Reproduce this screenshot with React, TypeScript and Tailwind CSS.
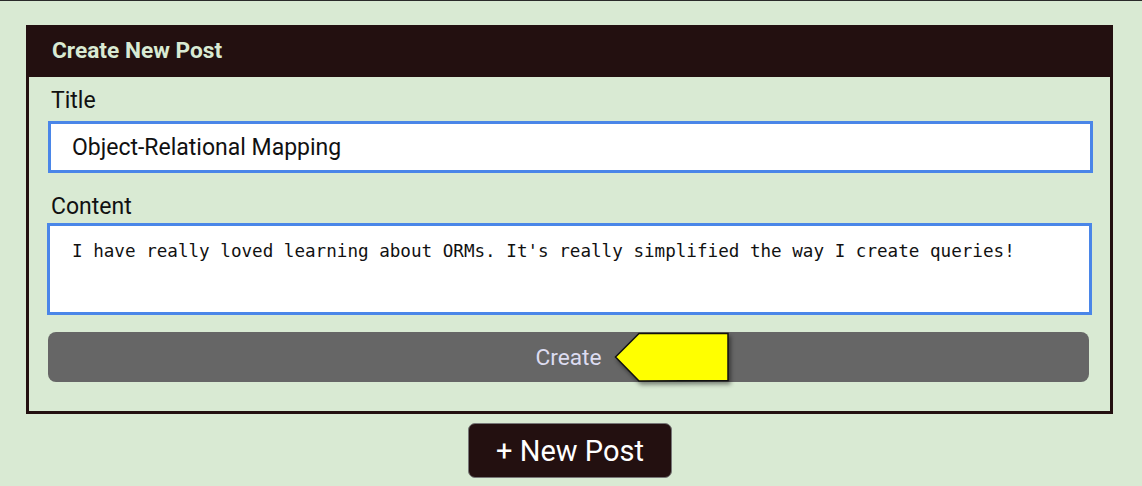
import React from "react";

export default function App() {
  return (
    <div
      className="w-[1142px] h-[486px] bg-[#d9ead3] border-t border-[#2a2a2a] overflow-hidden"
      style={{ fontFamily: "Roboto, 'Liberation Sans', sans-serif" }}
    >
      <div className="ml-[26px] mt-[24px] w-[1087px]">
        <div className="h-[52px] bg-[#231010] flex items-center pl-[26px]">
          <span className="text-[22.7px] font-bold text-[#d9ead3]">Create New Post</span>
        </div>
        <div className="border-x-[3px] border-b-[3px] border-[#231010] pl-[19px] pt-[11px] pb-[29px]">
          <div className="text-[23px] leading-[26px] text-[#111] pl-[3px]">Title</div>
          <div className="mt-[7px] w-[1045px] h-[52px] bg-white border-[3px] border-[#4a86e8] flex items-center pl-[21px] pt-[2px] text-[23px] text-[#111]">
            Object-Relational Mapping
          </div>
          <div className="mt-[21px] text-[23px] leading-[26px] text-[#111] pl-[3px]">Content</div>
          <div
            className="mt-[3px] -ml-[1px] w-[1045px] h-[92px] bg-white border-[3px] border-[#4a86e8] pl-[22px] pt-[15px] text-[17.6px] leading-[20px] text-[#111] whitespace-pre"
            style={{ fontFamily: "'DejaVu Sans Mono', monospace" }}
          >
            I have really loved learning about ORMs. It's really simplified the way I create queries!
          </div>
          <div className="relative mt-[17px] w-[1041px] h-[50px] bg-[#666666] rounded-[8px] flex items-center justify-center">
            <span className="text-[22.7px] text-[#dcdcf0] pt-[2px]">Create</span>
            <svg
              className="absolute left-[566px] top-0 drop-shadow-[2px_3px_2px_rgba(0,0,0,0.45)]"
              width="118"
              height="52"
              viewBox="0 0 118 52"
            >
              <polygon
                points="1.5,25 25,1.5 114,1.5 114,48.5 25,49"
                fill="#ffff00"
                stroke="#111"
                strokeWidth="1.5"
                strokeLinejoin="miter"
              />
            </svg>
          </div>
        </div>
      </div>
      <div className="mt-[9px] ml-[468px] w-[204px] h-[55px] bg-[#231010] border border-[#777] rounded-[7px] flex items-center justify-center pt-[3px]">
        <span className="text-[29px] text-white">+ New Post</span>
      </div>
    </div>
  );
}
